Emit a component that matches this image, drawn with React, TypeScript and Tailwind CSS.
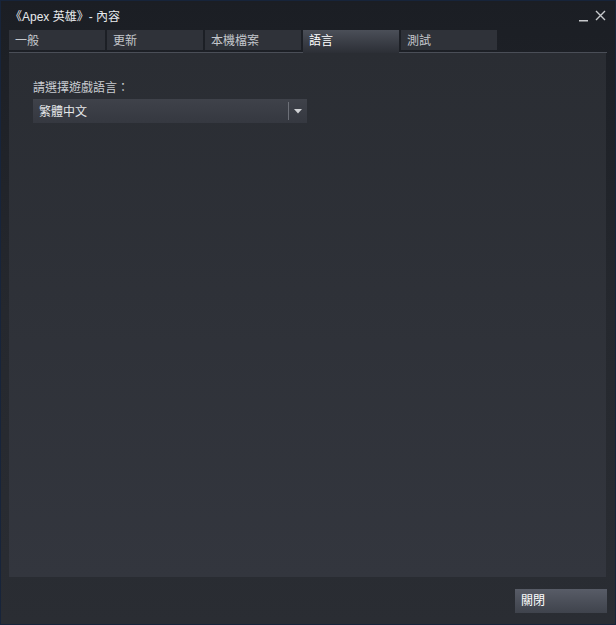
import React from "react";

const font = { fontFamily: '"Liberation Sans", "Noto Sans CJK TC", sans-serif' };

const tabs = ["一般", "更新", "本機檔案", "語言", "測試"];

export default function App() {
  return (
    <div
      className="w-[616px] h-[625px] border border-[#17243a] bg-gradient-to-b from-[#1b1e24] via-[#25282e] to-[#2a2d33] flex flex-col text-[12px] text-[#dfe1e4]"
      style={font}
    >
      {/* title bar */}
      <div className="h-[29px] flex items-start justify-between pl-[9px] pr-[9px] pt-[9px]">
        <span className="text-[#e8eaec] leading-[15px]">《Apex 英雄》- 內容</span>
        <div className="flex items-start gap-[6px]">
          <svg width="10" height="12" viewBox="0 0 10 12">
            <rect x="0" y="10" width="9" height="1.5" fill="#c7c9cc" />
          </svg>
          <svg width="11" height="11" viewBox="0 0 11 11">
            <path d="M1 1 L10 10 M10 1 L1 10" stroke="#c7c9cc" strokeWidth="1.4" />
          </svg>
        </div>
      </div>

      {/* tabs */}
      <div className="mx-[8px] flex items-stretch h-[23px] border-b border-[#4a4e57]">
        {tabs.map((t, i) => {
          const active = i === 3;
          return (
            <div
              key={t}
              className={
                active
                  ? "w-[96px] mr-[2px] -mb-px h-[23px] pl-[6px] pt-[4px] bg-gradient-to-b from-[#4b4f58] to-[#2c2f36] text-white leading-[15px]"
                  : "w-[96px] mr-[2px] h-[20px] pl-[6px] pt-[4px] bg-[#2f3239] text-[#c4c7cc] leading-[15px]"
              }
            >
              {t}
            </div>
          );
        })}
      </div>

      {/* content panel */}
      <div className="mx-[8px] mr-[9px] h-[524px] bg-gradient-to-b from-[#2a2d33] to-[#33363e] pl-[24px] pt-[28px]">
        <div className="text-[#c9ccd1] leading-[14px]">請選擇遊戲語言：</div>
        <div className="mt-[4px] w-[274px] h-[24px] bg-gradient-to-b from-[#3f424a] to-[#353840] flex items-center">
          <span className="flex-1 pl-[6px] pt-[2px] text-[#e6e8ea] leading-[15px]">繁體中文</span>
          <div className="w-px h-[18px] bg-[#6d7078]" />
          <div className="w-[18px] flex justify-center">
            <svg width="8" height="5" viewBox="0 0 8 5">
              <path d="M0 0 L8 0 L4 4.5 Z" fill="#d0d2d5" />
            </svg>
          </div>
        </div>
      </div>

      {/* footer */}
      <div className="flex justify-end pr-[8px] pt-[12px]">
        <div className="w-[92px] h-[24px] bg-gradient-to-b from-[#585c67] to-[#3f434c] pl-[6px] flex items-center text-white leading-[15px]">
          關閉
        </div>
      </div>
    </div>
  );
}
